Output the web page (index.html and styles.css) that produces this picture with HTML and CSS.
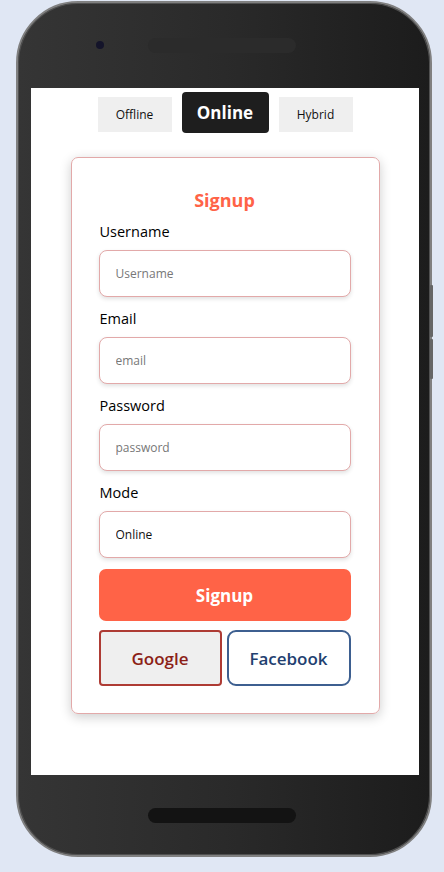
FILE: index.html
```html
<!DOCTYPE html>
<html lang="en">
<head>
<meta charset="utf-8">
<title>Signup</title>
<link rel="stylesheet" href="styles.css">
</head>
<body>
<div class="phone">
  <div class="phone-top">
    <span class="camera"></span>
    <span class="speaker"></span>
  </div>
  <div class="screen">
    <div class="tabs">
      <button class="tab">Offline</button>
      <button class="tab tab-active">Online</button>
      <button class="tab">Hybrid</button>
    </div>
    <form class="card">
      <h2 class="title">Signup</h2>
      <div class="field">
        <label class="label">Username</label>
        <input class="input" type="text" placeholder="Username">
      </div>
      <div class="field">
        <label class="label">Email</label>
        <input class="input" type="email" placeholder="email">
      </div>
      <div class="field">
        <label class="label">Password</label>
        <input class="input" type="password" placeholder="password">
      </div>
      <div class="field">
        <label class="label">Mode</label>
        <select class="input select">
          <option>Online</option>
          <option>Offline</option>
          <option>Hybrid</option>
        </select>
      </div>
      <button type="button" class="submit">Signup</button>
      <div class="socials">
        <button type="button" class="social google">Google</button>
        <button type="button" class="social facebook">Facebook</button>
      </div>
    </form>
  </div>
  <div class="phone-bottom">
    <span class="speaker speaker-bottom"></span>
  </div>
  <span class="side-btn side-btn-1"></span>
  <span class="side-btn side-btn-2"></span>
</div>
</body>
</html>
```

FILE: styles.css
```css
* { box-sizing: border-box; }
html, body { margin: 0; padding: 0; }
body {
  background: #e0e7f4;
  font-family: "Open Sans", "Noto Sans", sans-serif;
  width: 444px;
  height: 872px;
  overflow: hidden;
}
.phone {
  position: relative;
  margin-left: 16px;
  margin-top: 1px;
  width: 416px;
  height: 856px;
  border-radius: 62px;
  border: 2px solid #808080;
  box-shadow: inset 0 0 0 1px #505050;
  background: linear-gradient(90deg, #353535 0%, #2a2a2a 50%, #1c1c1c 100%);
  display: flex;
  flex-direction: column;
}
.phone-top {
  height: 85px;
  position: relative;
  flex: none;
}
.camera {
  position: absolute;
  left: 78px;
  top: 38px;
  width: 8px;
  height: 8px;
  border-radius: 50%;
  background: #14142a;
}
.speaker {
  position: absolute;
  left: 130px;
  top: 35px;
  width: 148px;
  height: 15px;
  border-radius: 8px;
  background: #2b2b2b;
}
.screen {
  flex: none;
  margin-left: 13px;
  width: 388px;
  height: 687px;
  background: #fff;
  display: flex;
  flex-direction: column;
  align-items: center;
}
.phone-bottom {
  position: relative;
  flex: 1;
}
.speaker-bottom {
  top: 33px;
  background: #131313;
}
.side-btn {
  position: absolute;
  right: -3px;
  width: 3px;
  background: #666;
  border-radius: 1px;
}
.side-btn-1 { top: 282px; height: 52px; }
.side-btn-2 { top: 336px; height: 40px; }

.tabs {
  display: flex;
  gap: 10px;
  padding-top: 4px;
  align-items: flex-start;
}
.tab {
  font-family: inherit;
  border: none;
  margin-top: 5px;
  width: 74px;
  height: 35px;
  background: #efefef;
  color: #111;
  font-size: 12px;
  padding: 0;
}
.tab-active {
  margin-top: 0;
  width: 87px;
  height: 41px;
  background: #1e1e1e;
  color: #fff;
  font-size: 17px;
  font-weight: 700;
  border-radius: 4px;
}
.card {
  margin: 24px 0 0 0;
  width: 309px;
  border: 1px solid #e2a9a9;
  border-radius: 7px;
  box-shadow: 0 3px 12px rgba(0, 0, 0, 0.2);
  padding: 30px 28px 27px 27px;
  display: flex;
  flex-direction: column;
}
.title {
  margin: 0;
  text-align: center;
  color: #ff6347;
  font-size: 18px;
  line-height: 24px;
  font-weight: 700;
}
.field {
  display: flex;
  flex-direction: column;
  margin-top: 10px;
}
.field + .field { margin-top: 12px; }
.label {
  font-size: 14.5px;
  line-height: 20px;
  color: #000;
  padding-left: 1px;
  margin-bottom: 8px;
}
.input {
  font-family: inherit;
  height: 47px;
  width: 100%;
  border: 1px solid #e2a9a9;
  border-radius: 8px;
  box-shadow: 0 2px 4px rgba(0, 0, 0, 0.12);
  padding: 0 16px;
  font-size: 12px;
  color: #111;
  background: #fff;
  outline: none;
}
.input::placeholder { color: #777; }
.select {
  appearance: none;
  -webkit-appearance: none;
}
.submit {
  font-family: inherit;
  margin-top: 11px;
  height: 52px;
  border: none;
  border-radius: 7px;
  background: #ff6347;
  color: #fff;
  font-size: 17px;
  font-weight: 700;
}
.socials {
  margin-top: 9px;
  display: grid;
  grid-template-columns: 123px 124px;
  gap: 5px;
}
.social {
  font-family: inherit;
  height: 56px;
  font-size: 17px;
  font-weight: 600;
  padding: 0;
}
.google {
  background: #efefef;
  border: 2px solid #ae3b34;
  border-radius: 4px;
  color: #8c1f17;
}
.facebook {
  background: #fff;
  border: 2px solid #3d5f90;
  border-radius: 9px;
  color: #223f70;
}
```
